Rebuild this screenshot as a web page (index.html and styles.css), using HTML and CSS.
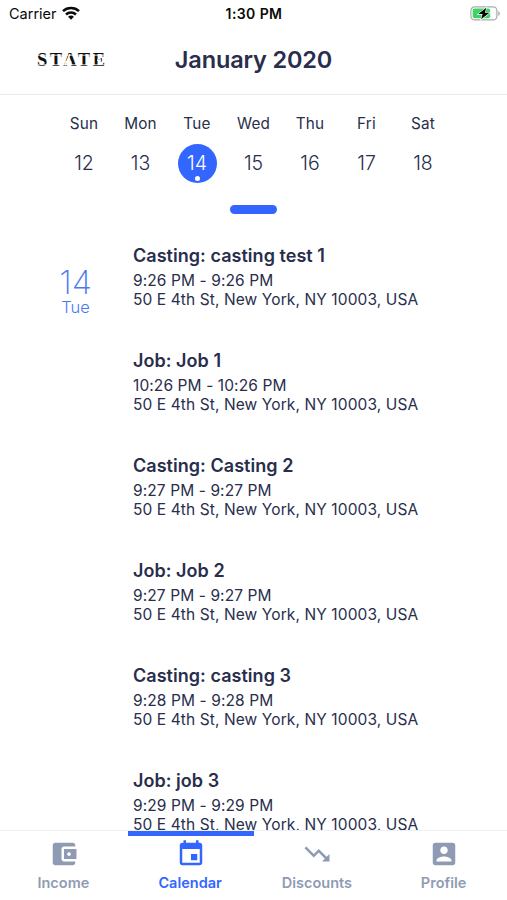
FILE: index.html
```html
<!DOCTYPE html>
<html lang="en">
<head>
<meta charset="utf-8">
<title>Calendar</title>
<link rel="stylesheet" href="styles.css">
</head>
<body>
<div class="app">
  <div class="status">
    <div class="carrier"><span>Carrier</span>
      <svg width="18" height="14" viewBox="0 0 18 14"><g fill="none" stroke="#0a0a0a" stroke-width="2.5"><path d="M1 5.1C5.4.9 12.6.9 17 5.1"/><path d="M4 8.500C6.800 5.800 11.200 5.800 14 8.500"/></g><path d="M6.100 10.700c1.700-1.500 4.100-1.500 5.800 0L9 13.700z" fill="#0a0a0a"/></svg>
    </div>
    <div class="clock">1:30 PM</div>
    <svg class="battery" width="31" height="15" viewBox="0 0 31 15"><rect x=".9" y=".9" width="26" height="13" rx="3.700" fill="#fff" stroke="#aaa" stroke-width="1.200"/><path d="M28.300 5c2 .7 2 4.200 0 5z" fill="#aaa"/><rect x="2.700" y="2.600" width="17.500" height="9.600" rx="2" fill="#3dd366"/><path d="M16.300 1.700 8.200 8.100h4.400l-1.500 5.200 8.300-6.500h-4.500z" fill="#000" stroke="#fff" stroke-width="1.200" paint-order="stroke"/></svg>
  </div>
  <header class="header">
    <svg class="logo" width="72" height="20" viewBox="0 0 72 20"><text x="1" y="16.200" textLength="68" lengthAdjust="spacing">STATE</text><path d="M0 5.200h72M0 14.800h72" stroke="#fff" stroke-width=".8"/><path d="M29 15.500 34 4M29 11.800h6.500M61 10h4" stroke="#fff" stroke-width="1.400"/></svg>
    <h1>January 2020</h1>
  </header>
  <section class="week">
    <div class="day"><span>Sun</span><b>12</b></div>
    <div class="day"><span>Mon</span><b>13</b></div>
    <div class="day selected"><span>Tue</span><b>14</b></div>
    <div class="day"><span>Wed</span><b>15</b></div>
    <div class="day"><span>Thu</span><b>16</b></div>
    <div class="day"><span>Fri</span><b>17</b></div>
    <div class="day"><span>Sat</span><b>18</b></div>
  </section>
  <div class="handle"></div>
  <main class="agenda">
    <div class="date"><strong>14</strong><span>Tue</span></div>
    <div class="events">
      <article><h2>Casting: casting test 1</h2><p>9:26 PM - 9:26 PM</p><p>50 E 4th St, New York, NY 10003, USA</p></article>
      <article><h2>Job: Job 1</h2><p>10:26 PM - 10:26 PM</p><p>50 E 4th St, New York, NY 10003, USA</p></article>
      <article><h2>Casting: Casting 2</h2><p>9:27 PM - 9:27 PM</p><p>50 E 4th St, New York, NY 10003, USA</p></article>
      <article><h2>Job: Job 2</h2><p>9:27 PM - 9:27 PM</p><p>50 E 4th St, New York, NY 10003, USA</p></article>
      <article><h2>Casting: casting 3</h2><p>9:28 PM - 9:28 PM</p><p>50 E 4th St, New York, NY 10003, USA</p></article>
      <article><h2>Job: job 3</h2><p>9:29 PM - 9:29 PM</p><p>50 E 4th St, New York, NY 10003, USA</p></article>
    </div>
  </main>
  <nav class="tabs">
    <div class="tab"><svg viewBox="0 0 24 24"><path d="M21 18v1c0 1.100-.9 2-2 2H5c-1.110 0-2-.9-2-2V5c0-1.100.89-2 2-2h14c1.100 0 2 .9 2 2v1h-9c-1.110 0-2 .9-2 2v8c0 1.100.89 2 2 2h9zm-9-2h10V8H12v8zm4-2.500c-.83 0-1.500-.67-1.500-1.500s.67-1.500 1.500-1.500 1.500.67 1.500 1.500-.67 1.500-1.500 1.500z"/></svg><span>Income</span></div>
    <div class="tab active"><svg viewBox="0 0 24 24"><path d="M17 12h-5v5h5v-5zM16 1v2H8V1H6v2H5c-1.110 0-1.990.9-1.990 2L3 19c0 1.100.89 2 2 2h14c1.100 0 2-.9 2-2V5c0-1.100-.9-2-2-2h-1V1h-2zm3 18H5V8h14v11z"/></svg><span>Calendar</span></div>
    <div class="tab"><svg viewBox="0 0 24 24"><path d="M16 18l2.290-2.290-4.880-4.880-4 4L2 7.410 3.410 6l6 6 4-4 6.300 6.290L22 12v6z"/></svg><span>Discounts</span></div>
    <div class="tab"><svg viewBox="0 0 24 24"><path d="M3 5v14c0 1.100.89 2 2 2h14c1.100 0 2-.9 2-2V5c0-1.100-.9-2-2-2H5c-1.110 0-2 .9-2 2zm12 4c0 1.660-1.340 3-3 3s-3-1.340-3-3 1.340-3 3-3 3 1.340 3 3zm-9 8c0-2 4-3.100 6-3.100s6 1.100 6 3.100v1H6v-1z"/></svg><span>Profile</span></div>
  </nav>
</div>
</body>
</html>
```
FILE: styles.css
```css
* { box-sizing: border-box; }
body { margin: 0; background: #fff; color: #282e4c; font-family: Inter, "Liberation Sans", sans-serif; }
h1, h2, p { margin: 0; }
svg { display: block; flex: none; }
.app { width: 507px; height: 900px; display: flex; flex-direction: column; overflow: hidden; }
.status { height: 27px; flex: none; display: grid; grid-template-columns: 1fr auto 1fr; align-items: center; padding: 0 6px 0 9px; color: #0a0a0a; font-size: 14.500px; }
.carrier { display: flex; align-items: center; gap: 5px; }
.carrier svg { margin-top: -2px; }
.clock { font-weight: 600; font-size: 14px; letter-spacing: .4px; margin-left: -2px; }
.battery { justify-self: end; margin-top: -1px; }
.header { height: 68px; flex: none; display: grid; grid-template-columns: 1fr auto 1fr; align-items: center; padding: 0 36px; border-bottom: 1px solid #e9ebef; }
.logo { margin-top: -1px; }
.logo text { font: bold 18.500px "Liberation Serif", serif; fill: #111; }
h1 { font-size: 23.500px; font-weight: 600; line-height: 30px; margin-top: -2px; letter-spacing: -.15px; }
.week { flex: none; display: grid; grid-template-columns: repeat(7, 56.500px); justify-content: center; padding-top: 18px; }
.day { display: flex; flex-direction: column; align-items: center; gap: 10px; font-size: 15.300px; line-height: 21px; letter-spacing: .2px; }
.day b { position: relative; width: 39px; height: 39px; border-radius: 50%; line-height: 39px; text-align: center; font-size: 19.500px; font-weight: 300; letter-spacing: 0; }
.selected b { background: #3366ff; color: #fff; }
.selected b::after { content: ""; position: absolute; left: 17px; top: 32px; width: 5px; height: 5px; border-radius: 50%; background: #fff; }
.handle { flex: none; width: 47px; height: 9px; margin: 22px auto 0; border-radius: 5px; background: #3366ff; }
.agenda { flex: 1; min-height: 0; overflow: hidden; display: grid; grid-template-columns: 133px 1fr; padding-top: 30px; }
.date { display: flex; flex-direction: column; align-items: center; padding: 19px 0 0 18px; color: #4a78f5; font-weight: 300; }
.date strong { font-size: 33px; line-height: 38px; font-weight: 200; }
.date span { font-size: 16.500px; line-height: 17px; margin-top: -2px; }
article { height: 105px; }
h2 { font-size: 18px; line-height: 24px; font-weight: 600; letter-spacing: .04px; margin-bottom: 3px; }
p { font-size: 15.500px; line-height: 19px; letter-spacing: .1px; white-space: nowrap; }
.tabs { flex: none; height: 70px; border-top: 1px solid #edf0f5; display: grid; grid-template-columns: repeat(4, 1fr); }
.tab { position: relative; display: flex; flex-direction: column; align-items: center; padding-top: 8px; gap: 4px; color: #8f9bb3; font-size: 14.500px; font-weight: 600; line-height: 19px; }
.tab svg { width: 30px; height: 30px; fill: currentColor; margin-left: 1px; }
.active { color: #3366ff; }
.active::before { content: ""; position: absolute; top: 0; left: 1px; right: 0; height: 5px; background: #3366ff; }
```
